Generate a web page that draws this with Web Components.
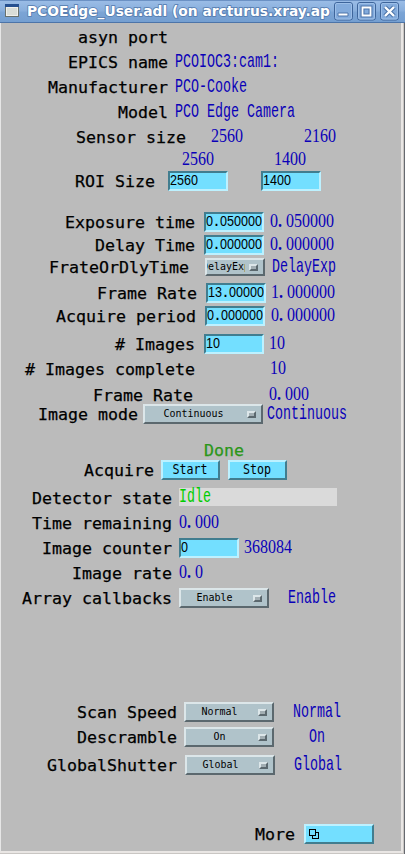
<!DOCTYPE html>
<html lang="en">
<head>
<meta charset="utf-8">
<title>PCOEdge_User.adl</title>
<style>
html,body{margin:0;height:100%;overflow:hidden;background:#bbb}
</style>
</head>
<body>
<adl-window>
  <adl-row h="25"><adl-label w="168">asyn port</adl-label></adl-row>
  <adl-row h="25"><adl-label w="168">EPICS name</adl-label><adl-value gap="7">PCOIOC3:cam1:</adl-value></adl-row>
  <adl-row h="25"><adl-label w="168">Manufacturer</adl-label><adl-value gap="7">PCO-Cooke</adl-value></adl-row>
  <adl-row h="25"><adl-label w="168">Model</adl-label><adl-value gap="7">PCO Edge Camera</adl-value></adl-row>
  <adl-row h="23"><adl-label w="186">Sensor size</adl-label><adl-value gap="25">2560</adl-value><adl-value gap="61">2160</adl-value></adl-row>
  <adl-row h="21"><adl-value gap="182">2560</adl-value><adl-value gap="60">1400</adl-value></adl-row>
  <adl-row h="41"><adl-label w="155">ROI Size</adl-label><adl-input gap="13" w="60">2560</adl-input><adl-input gap="33" w="60">1400</adl-input></adl-row>
  <adl-row h="23"><adl-label w="195">Exposure time</adl-label><adl-input gap="9" w="60">0.050000</adl-input><adl-value gap="6">0.050000</adl-value></adl-row>
  <adl-row h="22"><adl-label w="195">Delay Time</adl-label><adl-input gap="9" w="60">0.000000</adl-input><adl-value gap="6">0.000000</adl-value></adl-row>
  <adl-row h="26"><adl-label w="189">FrateOrDlyTime</adl-label><adl-menu gap="16" w="60" class="short">DelayExp</adl-menu><adl-value gap="7">DelayExp</adl-value></adl-row>
  <adl-row h="23"><adl-label w="197">Frame Rate</adl-label><adl-input gap="9" w="60">13.00000</adl-input><adl-value gap="5">1.000000</adl-value></adl-row>
  <adl-row h="28"><adl-label w="196">Acquire period</adl-label><adl-input gap="9" w="60">0.000000</adl-input><adl-value gap="6">0.000000</adl-value></adl-row>
  <adl-row h="25"><adl-label w="195"># Images</adl-label><adl-input gap="9" w="60">10</adl-input><adl-value gap="5">10</adl-value></adl-row>
  <adl-row h="26"><adl-label w="195"># Images complete</adl-label><adl-value gap="75">10</adl-value></adl-row>
  <adl-row h="19"><adl-label w="193">Frame Rate</adl-label><adl-value gap="76">0.000</adl-value></adl-row>
  <adl-row h="36"><adl-label w="138">Image mode</adl-label><adl-menu gap="5" w="120">Continuous</adl-menu><adl-value gap="4">Continuous</adl-value></adl-row>
  <adl-row h="20"><adl-label w="244" class="done">Done</adl-label></adl-row>
  <adl-row h="28"><adl-label w="154">Acquire</adl-label><adl-button gap="7" w="59">Start</adl-button><adl-button gap="8" w="59">Stop</adl-button></adl-row>
  <adl-row h="25"><adl-label w="172">Detector state</adl-label><adl-value gap="7" class="state">Idle</adl-value></adl-row>
  <adl-row h="25"><adl-label w="172">Time remaining</adl-label><adl-value gap="7">0.000</adl-value></adl-row>
  <adl-row h="25"><adl-label w="172">Image counter</adl-label><adl-input gap="7" w="60">0</adl-input><adl-value gap="5">368084</adl-value></adl-row>
  <adl-row h="25"><adl-label w="172">Image rate</adl-label><adl-value gap="7">0.0</adl-value></adl-row>
  <adl-row h="114"><adl-label w="172">Array callbacks</adl-label><adl-menu gap="7" w="90">Enable</adl-menu><adl-value gap="19">Enable</adl-value></adl-row>
  <adl-row h="25"><adl-label w="177">Scan Speed</adl-label><adl-menu gap="7" w="90">Normal</adl-menu><adl-value gap="19">Normal</adl-value></adl-row>
  <adl-row h="28"><adl-label w="177">Descramble</adl-label><adl-menu gap="7" w="90">On</adl-menu><adl-value gap="35">On</adl-value></adl-row>
  <adl-row h="69"><adl-label w="177">GlobalShutter</adl-label><adl-menu gap="8" w="90">Global</adl-menu><adl-value gap="19">Global</adl-value></adl-row>
  <adl-row h="20"><adl-label w="295">More</adl-label><adl-button gap="9" w="70" class="related"><svg width="11" height="11" viewBox="0 0 11 11" fill="none" stroke="#000" shape-rendering="crispEdges"><path d="M3.5 6.5v3h6v-6h-3"/><path d="M.5.5h6v6h-6z"/></svg></adl-button></adl-row>
</adl-window>
<script>
// Shared base: renders the shadow markup and applies the gap / w / h sizes.
class AdlElement extends HTMLElement {
  connectedCallback() {
    if (this.shadowRoot) return;
    this.attachShadow({ mode: 'open' }).innerHTML = this.constructor.markup;
    if (this.hasAttribute('gap')) this.style.marginLeft = this.getAttribute('gap') + 'px';
    if (this.hasAttribute('w')) this.style.width = this.getAttribute('w') + 'px';
    if (this.hasAttribute('h')) this.style.height = this.getAttribute('h') + 'px';
    // Numbers use proportional digits; the decimal point gets a full digit cell.
    if (this.matches('adl-value, adl-input') && /^[\d.]+$/.test(this.textContent)) {
      this.classList.add('num');
      this.innerHTML = this.textContent.replace('.', '<b>.</b>');
    }
  }
}
const define = (name, markup) =>
  customElements.define(name, class extends AdlElement { static markup = markup; });

define('adl-titlebar', `<style>
:host{display:flex;height:23px;box-sizing:border-box;align-items:flex-start;padding:1px 1px 0 5px;
 background:linear-gradient(#9abce6,#89afdd 45%,#7ba4d5 55%,#749fd1);border-bottom:1px solid #4c74a8;border-top:1px solid #6b91c4}
.icon{margin:2px 8px 0 0;flex:none}
.title{width:303px;height:20px;overflow:visible;flex:none}
text{font:bold 14px "DejaVu Sans",sans-serif;fill:#fff;stroke:#5279ad;stroke-width:1.6px;paint-order:stroke}
.btns{display:flex;gap:4px;margin-left:4px}
</style>
<svg class="icon" width="14" height="13" shape-rendering="crispEdges"><path fill="#68716d" d="M0 0h14v13H0z"/><path fill="#254f8f" d="M0 0h14v3H0z"/><path fill="#f0f0ec" d="M1 3h12v9H1z"/><path fill="#d9ddd8" d="M2 4h10v7H2z"/></svg>
<svg class="title" width="303" height="20"><text x="0" y="14" textLength="303" lengthAdjust="spacingAndGlyphs">PCOEdge_User.adl (on arcturus.xray.ap</text></svg>
<div class="btns">
<svg width="19" height="19"><rect x=".5" y=".5" width="18" height="17.5" rx="2.5" fill="#83abdc" stroke="#3e659b"/><rect x="1.5" y="1.5" width="16" height="15.5" rx="1.5" fill="none" stroke="#9dbfe8"/><path d="M4 11h10v3H4z" fill="#fff" stroke="#4d75aa"/></svg>
<svg width="19" height="19"><rect x=".5" y=".5" width="18" height="17.5" rx="2.5" fill="#83abdc" stroke="#3e659b"/><rect x="1.5" y="1.5" width="16" height="15.5" rx="1.5" fill="none" stroke="#9dbfe8"/><path d="M5.5 5.5h8v8h-8z" fill="none" stroke="#4d75aa" stroke-width="4"/><path d="M5.5 5.5h8v8h-8z" fill="none" stroke="#fff" stroke-width="1.8"/></svg>
<svg width="19" height="19"><rect x=".5" y=".5" width="18" height="17.5" rx="2.5" fill="#83abdc" stroke="#3e659b"/><rect x="1.5" y="1.5" width="16" height="15.5" rx="1.5" fill="none" stroke="#9dbfe8"/><path d="M5 5l9 9M14 5l-9 9" stroke="#4d75aa" stroke-width="4.5"/><path d="M5 5l9 9M14 5l-9 9" stroke="#fff" stroke-width="2.4"/></svg>
</div>`);

define('adl-window', `<style>
:host{display:flex;flex-direction:column;width:405px;height:854px;background:#bbb}
.frame{flex:1;display:flex;flex-direction:column;background:linear-gradient(90deg,#c9c6c3 0 404px,#66696f 404px)}
main{flex:1;box-sizing:border-box;padding-top:4px;border:solid #e9e6e4;border-width:0 2px 2px 0;box-shadow:inset 1px 0 #e6e6e6;margin:0 2px 1px 0;background:#bbb}
</style><adl-titlebar></adl-titlebar><div class="frame"><main><slot></slot></main></div>`);

define('adl-row', `<style>:host{display:flex;align-items:flex-start}</style><slot></slot>`);

define('adl-label', `<style>
:host{display:block;flex:none;height:19px;margin-top:1px;text-align:right;white-space:pre;color:#000;
 font:16.61px/20px "DejaVu Sans Mono",monospace;-webkit-text-stroke:.25px currentColor}
:host(.done){color:#2a9618}
</style><slot></slot>`);

define('adl-value', `<style>
:host{display:block;flex:none;height:20px;box-sizing:border-box;padding-top:7px;white-space:pre;color:#0a00b8;
 font:13.333px/9px "Liberation Mono",monospace}
span{display:block;transform-origin:0 8px;transform:scaleY(1.5)}
:host(.state){width:158px;height:18px;padding-top:6px;background:#dadada;color:#00cd00}
:host(.num){padding-top:5px;font:16px/9px "Liberation Serif",serif}
:host(.num) span{transform-origin:0 10px;transform:scaleY(1.24)}
::slotted(b){font-weight:bold;padding-right:4px}
</style><span><slot></slot></span>`);

define('adl-input', `<style>
:host{display:block;flex:none;height:20px;box-sizing:border-box;border:2px solid;border-color:#417d8f #bdf1ff #bdf1ff #417d8f;
 background:#73dfff;overflow:hidden;color:#000;font:12.59px/16px "Liberation Sans",sans-serif;white-space:pre}
span{display:block;transform-origin:0 12px;transform:scaleY(1.16)}
::slotted(b){font-weight:bold;padding:0 1.75px}
</style><span><slot></slot></span>`);

define('adl-button', `<style>
:host{display:block;flex:none;height:20px;box-sizing:border-box;border:2px solid;border-color:#bdf1ff #417d8f #417d8f #bdf1ff;
 background:#73dfff;color:#000;text-align:center;font:11.63px/16px "DejaVu Sans Mono",monospace}
span{display:block;margin-right:1px;transform-origin:0 12px;transform:scaleY(1.18)}
:host(.related){text-align:left;padding:3px 0 0 3px}
:host(.related) span{display:flex;transform:none}
</style><span><slot></slot></span>`);

define('adl-menu', `<style>
:host{display:flex;flex:none;height:20px;box-sizing:border-box;border:2px solid;border-color:#dce6e9 #5b686e #5b686e #dce6e9;
 background:#b0c3ca;color:#000;font:9.97px/16px "DejaVu Sans Mono",monospace;padding-right:5px}
:host(.short){height:18px;margin-top:1px;line-height:14px}
.t{flex:1;display:flex;justify-content:center;overflow:hidden;margin-right:5px}
:host(.short) .t{margin-right:4px}
.i{width:9px;height:7px;box-sizing:border-box;align-self:center;border:2px solid;border-color:#dce6e9 #5b686e #5b686e #dce6e9;background:#a2aeb3}
</style><div class="t"><slot></slot></div><div class="i"></div>`);
</script>
</body>
</html>
